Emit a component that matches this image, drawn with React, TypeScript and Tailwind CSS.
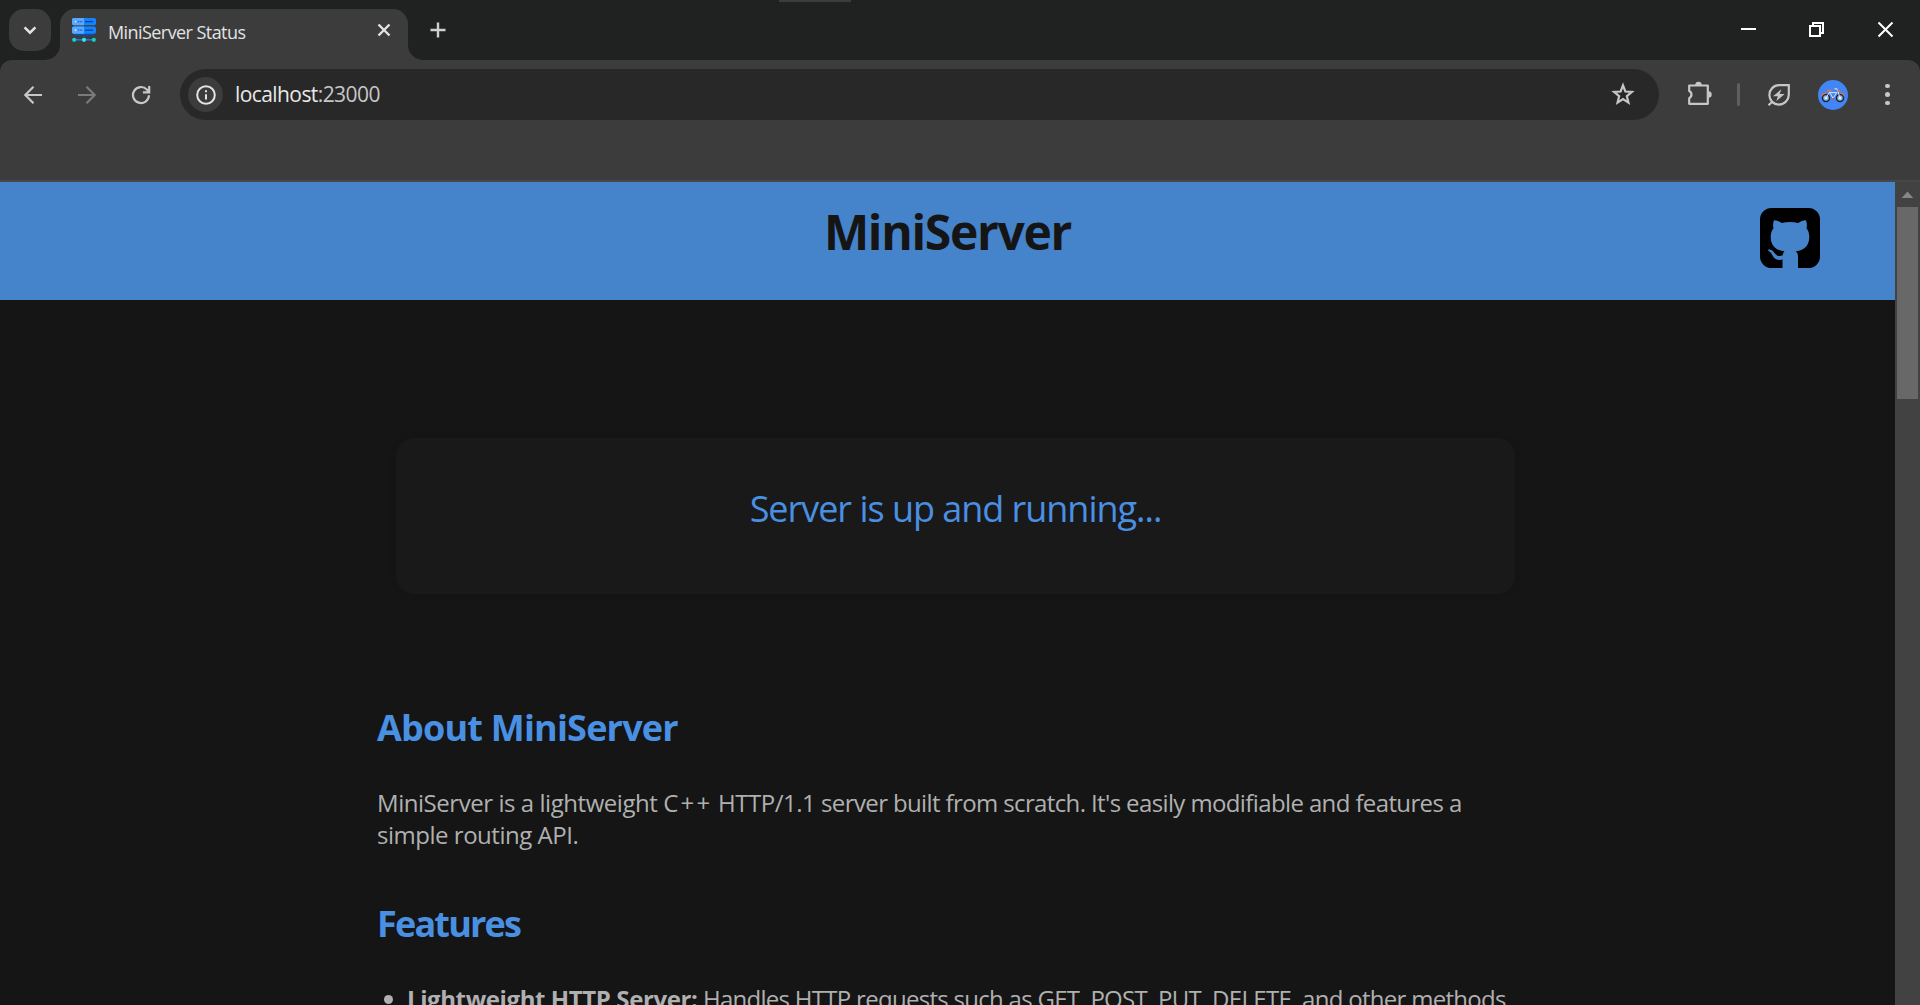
import type { ReactNode } from "react";

function Stroke({ size, children, className = "" }: { size: number; children: ReactNode; className?: string }) {
  return (
    <svg width={size} height={size} viewBox={`0 0 ${size} ${size}`} fill="none" stroke="currentColor" className={`block shrink-0 ${className}`}>
      {children}
    </svg>
  );
}

function ServerFavicon() {
  return (
    <svg width="24" height="24" viewBox="0 0 24 24" className="block shrink-0">
      <rect x="2" y="14" width="20" height="3.5" rx="1" fill="#0b4fae" />
      <path d="M12 17v4" stroke="#0b4fae" strokeWidth="1.4" />
      <path d="M2 21.8h20" stroke="#1a74e0" strokeWidth="1.6" />
      {[0, 8.6].map((y) => (
        <g key={y}>
          <rect x="0" y={y} width="24" height="7.2" rx="1.8" fill="#1184ff" />
          <path d={`M1.8 ${y}H12v7.2H1.8A1.8 1.8 0 0 1 0 ${y + 5.4}V${y + 1.8}A1.8 1.8 0 0 1 1.8 ${y}Z`} fill="#5aa7ff" />
          <circle cx="3.6" cy={y + 3.6} r="0.9" fill="#d8ecff" />
          <path d={`M5.6 ${y + 3.6}h1.3M7.6 ${y + 3.6}h1.3M9.4 ${y + 3.6}h1`} stroke="#1a62c4" strokeWidth="1.2" />
          <path d={`M13 ${y + 3.6}h8`} stroke="#0a3f94" strokeWidth="1.3" />
        </g>
      ))}
      <circle cx="2.2" cy="21.8" r="2.1" fill="#17cfc0" />
      <circle cx="12" cy="21.8" r="2.1" fill="#35e6d4" />
      <circle cx="21.8" cy="21.8" r="2.1" fill="#17cfc0" />
    </svg>
  );
}

function BikeAvatar() {
  return (
    <svg width="30" height="30" viewBox="0 0 30 30" className="block shrink-0">
      <circle cx="15" cy="15" r="15" fill="#4285f4" />
      {[8, 22].map((x) => (
        <g key={x}>
          <circle cx={x} cy="18" r="3.5" fill="#7fbcf5" stroke="#2b2224" strokeWidth="1.5" />
          <circle cx={x} cy="18" r="1.3" fill="#f4fbff" />
        </g>
      ))}
      <path d="M3.600 16A4.800 4.800 0 0 1 8.400 13.200M21.600 13.200a4.800 4.800 0 0 1 4.800 2.600" stroke="#e8703f" strokeWidth="1.100" fill="none" />
      <path d="M8 18l3.200-5.400h7.600L15 18.400l-3.600-6.600M22 18 19 8.800h-2.600" stroke="#d5e6f5" strokeWidth="1" fill="none" />
      <path d="M9 10.600h4.400M18.800 11h3" stroke="#f07040" strokeWidth="1.600" />
      <circle cx="15.200" cy="18.800" r="1" fill="#d0495a" />
    </svg>
  );
}

function GithubSquare() {
  return (
    <svg width="60" height="60" viewBox="0 0 60 60" className="block shrink-0">
      <path
        fill="#000"
        d="M11.5 0h37A11.5 11.5 0 0 1 60 11.5v37A11.5 11.5 0 0 1 48.500 60H38V48.500C38 46 37.200 44.500 35.800 43.300C42 42.500 49.300 39.500 49.300 29C49.300 25.500 48.300 22.500 46.500 20.300C47 18.500 47.200 15.500 46 12.200C43.500 12 40.500 13.500 38.300 14.900C33 13.800 27 13.800 21.800 14.900C19.500 13.500 16.500 12 14 12.200C12.800 15.500 13 18.500 13.500 20.300C11.700 22.500 10.700 25.500 10.700 29C10.700 39.500 18 42.500 24.500 43.300C23.400 44.300 22.900 45.500 22.700 47.300C20 48.500 17 48.300 15 45.600C13.600 43.500 12.300 41.500 8.600 41.400C7.600 41.600 7.900 42.600 9 43.200C11 44.400 11.800 46 12.800 48C14.500 51.500 18.500 52.500 22.500 51.600V60H11.500A11.500 11.500 0 0 1 0 48.500v-37A11.500 11.500 0 0 1 11.500 0Z"
      />
    </svg>
  );
}

function TitleBar() {
  return (
    <div className="relative flex h-[60px] shrink-0 bg-[#202221]">
      <div className="absolute left-[779px] top-0 h-[2px] w-[72px] bg-[#3c3c3c]" />
      <div className="ml-[9px] mt-[9px] flex size-[42px] items-center justify-center rounded-[15px] bg-[#3c3c3c] text-[#e3e3e3]">
        <Stroke size={16}><path d="M2.600 5.300 8 10.700l5.400-5.400" strokeWidth="2.500" /></Stroke>
      </div>
      <div className="relative ml-[9px] mt-[9px] flex h-[51px] w-[348px] rounded-t-[15px] bg-[#3c3c3c] pl-3 pt-[9px]">
        <svg width="15" height="15" className="absolute -left-[15px] bottom-0"><path d="M15 0v15H0A15 15 0 0 0 15 0Z" fill="#3c3c3c" /></svg>
        <svg width="15" height="15" className="absolute -right-[15px] bottom-0"><path d="M0 0v15h15A15 15 0 0 1 0 0Z" fill="#3c3c3c" /></svg>
        <ServerFavicon />
        <span className="ml-3 mt-px h-6 flex-1 whitespace-nowrap text-[18px] leading-[26px] tracking-[-0.570px] text-[#e3e3e3]">MiniServer Status</span>
        <Stroke size={16} className="mr-4 mt-1 text-[#e3e3e3]"><path d="M2.500 2.500l11 11M13.500 2.500l-11 11" strokeWidth="2.400" /></Stroke>
      </div>
      <Stroke size={18} className="ml-[21px] mt-[21px] text-[#d0d0d0]"><path d="M9 1.500v15M1.500 9h15" strokeWidth="2.400" /></Stroke>
      <div className="ml-auto mr-[26px] flex pt-[21px] text-white">
        <Stroke size={17} className="mr-[51px]"><path d="M1 8h15" strokeWidth="2" /></Stroke>
        <Stroke size={17} className="mr-[52px]"><path d="M2 5h10v10H2zM5 4.500V2h10v10h-2.500" strokeWidth="2" /></Stroke>
        <Stroke size={17}><path d="M1.500 1.500l14 14M15.500 1.500l-14 14" strokeWidth="2" /></Stroke>
      </div>
    </div>
  );
}

function Toolbar() {
  return (
    <div className="shrink-0 bg-[#202221]">
      <div className="flex h-[122px] rounded-t-[12px] border-b-2 border-[#474747] bg-[#3c3c3c] pt-[9px] text-[#c7c7c7]">
        <div className="flex h-[51px] w-full items-center">
          <Stroke size={20} className="ml-[23px]"><path d="M19 10H2.500M10.500 1.800 2.300 10l8.200 8.200" strokeWidth="2.200" /></Stroke>
          <Stroke size={20} className="ml-[34px] text-[#7b7b7b]"><path d="M1 10h16.500M9.500 1.800l8.200 8.200-8.200 8.200" strokeWidth="2.200" /></Stroke>
          <Stroke size={20} className="ml-[34px]"><path d="M18 10.300a8 8 0 1 1-2.200-5.800L18 6.800M18.200 1v6.300h-6.300" strokeWidth="2.200" /></Stroke>
          <div className="ml-[29px] flex h-[51px] w-[1479px] items-center rounded-full bg-[#282828] pl-2 pr-6">
            <div className="flex size-[35px] items-center justify-center rounded-full bg-[#3c3c3c] text-[#e3e3e3]">
              <Stroke size={20}><circle cx="10" cy="10" r="8.800" strokeWidth="2" /><path d="M10 9.200v5.300M10 5.200v2" strokeWidth="2" /></Stroke>
            </div>
            <span className="-mt-[2px] ml-[12px] whitespace-nowrap text-[21px] leading-[30px] tracking-[-0.580px] text-[#e8e8e8]">
              localhost<span className="text-[#c7c7c7]">:23000</span>
            </span>
            <Stroke size={24} className="-mt-px ml-auto"><path d="M12 3.400l2.350 6.100 6.500.450-5 4.200 1.600 6.400L12 17l-5.450 3.550 1.600-6.400-5-4.200 6.500-.450Z" strokeWidth="2.200" /></Stroke>
          </div>
          <Stroke size={26} className="-mt-[3px] ml-[28px]">
            <path d="M2.200 5.500h18.600v18.300H2.200v-5.600a4 4 0 0 0 0-7.200Z" strokeWidth="2.200" strokeLinejoin="round" />
            <path d="M8.300 5a3.200 3.200 0 0 1 6.400 0ZM21.500 11.300a3.200 3.200 0 0 1 0 6.400Z" fill="currentColor" stroke="none" />
          </Stroke>
          <div className="ml-[24px] h-[23px] w-[3px] rounded-full bg-[#5f5f5f]" />
          <Stroke size={24} className="ml-[27px]">
            <path d="M21.800 2.200v9.300A10 10 0 0 1 12 21.600 9.400 9.400 0 0 1 2.400 12 9.700 9.700 0 0 1 12 2.200ZM5.500 18.500 1.500 22.300" strokeWidth="2.200" />
            <path d="M14.300 6.300 6 13.300h4.800l-1.400 4.800 8.300-7h-5Z" fill="currentColor" stroke="none" />
          </Stroke>
          <div className="ml-[27px] mt-px"><BikeAvatar /></div>
          <div className="ml-[37px] flex flex-col gap-[4px]">
            {[0, 1, 2].map((i) => <span key={i} className="size-[4.500px] rounded-full bg-[#c7c7c7]" />)}
          </div>
        </div>
      </div>
    </div>
  );
}

function Scrollbar() {
  return (
    <div className="flex w-[25px] shrink-0 flex-col items-center bg-[#424242]">
      <svg width="25" height="25" className="block shrink-0"><path d="M12.500 9.500 18.300 16H6.700Z" fill="#868686" /></svg>
      <div className="h-[192px] w-[21px] bg-[#686868]" />
    </div>
  );
}

export default function App() {
  return (
    <div className="relative flex h-[1005px] w-[1920px] flex-col overflow-hidden bg-[#151515] font-['Open_Sans',sans-serif]">
      <TitleBar />
      <Toolbar />
      <div className="flex min-h-0 flex-1">
        <main className="min-w-0 flex-1 overflow-hidden">
          <header className="grid h-[118px] grid-cols-[1fr_auto_1fr] bg-[#4583cb]">
            <h1 className="col-start-2 pt-[18px] text-[48px] font-bold leading-[64px] tracking-[-1.300px] text-[#151515]">MiniServer</h1>
            <div className="mr-[75px] mt-[26px] justify-self-end"><GithubSquare /></div>
          </header>
          <div className="ml-[377px] w-[1156px]">
            <section className="ml-[19px] mt-[138px] h-[156px] w-[1119px] rounded-[18px] bg-[#191919] pt-[47px] text-center shadow-[0_0_6px_rgba(0,0,0,0.1)]">
              <p className="text-[36px] leading-[48px] tracking-[-1.030px] text-[#4a90e2]">Server is up and running...</p>
            </section>
            <h2 className="mt-[110px] text-[36px] font-bold leading-[48px] tracking-[-0.800px] text-[#4a90e2]">About MiniServer</h2>
            <p className="mt-[35px] whitespace-nowrap text-[24px] leading-[32px] tracking-[-0.480px] text-[#b0b0b0]">
              <span className="tracking-[-0.450px]">MiniServer is a lightweight </span>
              <span className="tracking-[2.200px]">C++</span>
              <span className="tracking-[-0.490px]"> HTTP/1.1 </span>
              <span className="tracking-[-0.620px]">server built from scratch. It's easily modifiable and features a</span>
              <br />
              simple routing API.
            </p>
            <h2 className="mt-[49px] text-[36px] font-bold leading-[48px] tracking-[-1.800px] text-[#4a90e2]">Features</h2>
            <ul className="mt-[35px] text-[24px] leading-[32px] text-[#b0b0b0]">
              <li className="flex whitespace-nowrap pl-[7px]">
                <span className="mt-[12px] size-[9px] rounded-full bg-[#b0b0b0]" />
                <strong className="ml-[14px] font-bold tracking-[-0.400px]">Lightweight HTTP Server:</strong>
                <span className="ml-[5.500px] tracking-[-0.710px]">Handles HTTP requests such as GET, POST, PUT, DELETE, and other methods</span>
              </li>
            </ul>
          </div>
        </main>
        <Scrollbar />
      </div>
    </div>
  );
}
